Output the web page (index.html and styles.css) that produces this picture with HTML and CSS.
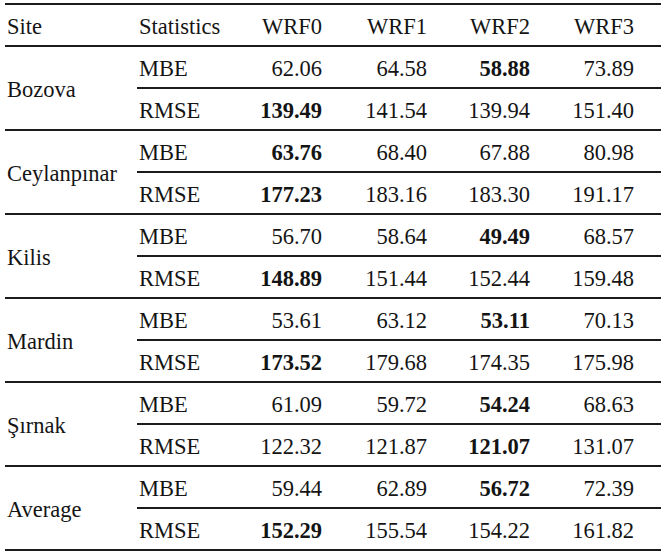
FILE: index.html
```html
<!DOCTYPE html>
<html>
<head>
<meta charset="utf-8">
<link rel="stylesheet" href="styles.css">
</head>
<body class="page">
<table class="stats">
  <colgroup>
    <col class="c-site"><col class="c-stat"><col class="c-w0"><col class="c-w1"><col class="c-w2"><col class="c-w3">
  </colgroup>
  <thead>
    <tr class="head"><th class="site">Site</th><th class="stat">Statistics</th><th class="num">WRF0</th><th class="num">WRF1</th><th class="num">WRF2</th><th class="num last">WRF3</th></tr>
  </thead>
  <tbody>
    <tr class="top"><td class="site" rowspan="2">Bozova</td><td class="stat">MBE</td><td class="num">62.06</td><td class="num">64.58</td><td class="num"><b class="best">58.88</b></td><td class="num last">73.89</td></tr>
    <tr class="bot"><td class="stat">RMSE</td><td class="num"><b class="best">139.49</b></td><td class="num">141.54</td><td class="num">139.94</td><td class="num last">151.40</td></tr>
    <tr class="top"><td class="site" rowspan="2">Ceylanpınar</td><td class="stat">MBE</td><td class="num"><b class="best">63.76</b></td><td class="num">68.40</td><td class="num">67.88</td><td class="num last">80.98</td></tr>
    <tr class="bot"><td class="stat">RMSE</td><td class="num"><b class="best">177.23</b></td><td class="num">183.16</td><td class="num">183.30</td><td class="num last">191.17</td></tr>
    <tr class="top"><td class="site" rowspan="2">Kilis</td><td class="stat">MBE</td><td class="num">56.70</td><td class="num">58.64</td><td class="num"><b class="best">49.49</b></td><td class="num last">68.57</td></tr>
    <tr class="bot"><td class="stat">RMSE</td><td class="num"><b class="best">148.89</b></td><td class="num">151.44</td><td class="num">152.44</td><td class="num last">159.48</td></tr>
    <tr class="top"><td class="site" rowspan="2">Mardin</td><td class="stat">MBE</td><td class="num">53.61</td><td class="num">63.12</td><td class="num"><b class="best">53.11</b></td><td class="num last">70.13</td></tr>
    <tr class="bot"><td class="stat">RMSE</td><td class="num"><b class="best">173.52</b></td><td class="num">179.68</td><td class="num">174.35</td><td class="num last">175.98</td></tr>
    <tr class="top"><td class="site" rowspan="2">Şırnak</td><td class="stat">MBE</td><td class="num">61.09</td><td class="num">59.72</td><td class="num"><b class="best">54.24</b></td><td class="num last">68.63</td></tr>
    <tr class="bot"><td class="stat">RMSE</td><td class="num">122.32</td><td class="num">121.87</td><td class="num"><b class="best">121.07</b></td><td class="num last">131.07</td></tr>
    <tr class="top"><td class="site" rowspan="2">Average</td><td class="stat">MBE</td><td class="num">59.44</td><td class="num">62.89</td><td class="num"><b class="best">56.72</b></td><td class="num last">72.39</td></tr>
    <tr class="bot"><td class="stat">RMSE</td><td class="num"><b class="best">152.29</b></td><td class="num">155.54</td><td class="num">154.22</td><td class="num last">161.82</td></tr>
  </tbody>
</table>
</body>
</html>
```
FILE: styles.css
```css
.page {
  margin: 0;
  padding: 3px 0 0 5px;
  background: #ffffff;
}
.stats {
  border-collapse: collapse;
  table-layout: fixed;
  width: 656px;
  border-top: 2px solid #1c1c1c;
  font-family: "Liberation Serif", "Times New Roman", serif;
  font-size: 22.5px;
  color: #141414;
}
.c-site { width: 132px; }
.c-stat { width: 100px; }
.c-w0 { width: 85px; }
.c-w1 { width: 105px; }
.c-w2 { width: 103px; }
.c-w3 { width: 131px; }
.stats th, .stats td {
  height: 37px;
  padding: 3px 0 0 0;
  font-family: "Liberation Serif", "Times New Roman", serif;
  font-weight: normal;
  line-height: 24px;
  vertical-align: middle;
}
.stats .head {
  border-bottom: 2px solid #1c1c1c;
}
.stats .top .stat,
.stats .top .num {
  border-bottom: 2px solid #1c1c1c;
}
.stats .bot {
  border-bottom: 2px solid #1c1c1c;
}
.stats .site {
  text-align: left;
  padding-left: 2px;
  border-bottom: 2px solid #1c1c1c;
}
.stats .stat { text-align: left; padding-left: 2px; }
.stats .num { text-align: right; }
.stats .last { padding-right: 27px; }
.best { font-weight: bold; }
```
